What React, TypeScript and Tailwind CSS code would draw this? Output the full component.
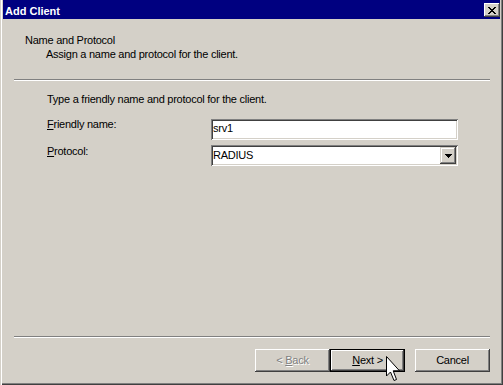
const raised =
  "shadow-[inset_-1px_-1px_#404040,inset_1px_1px_#ffffff,inset_-2px_-2px_#808080,inset_2px_2px_#d4d0c8]";

function CloseGlyph() {
  return (
    <svg width="8" height="7" viewBox="0 0 8 7" shapeRendering="crispEdges">
      <path
        d="M0 0h2v1H0zM6 0h2v1H6zM1 1h2v1H1zM5 1h2v1H5zM2 2h4v1H2zM3 3h2v1H3zM2 4h4v1H2zM1 5h2v1H1zM5 5h2v1H5zM0 6h2v1H0zM6 6h2v1H6z"
        fill="#000"
      />
    </svg>
  );
}

function DownArrow() {
  return (
    <svg width="7" height="4" viewBox="0 0 7 4" shapeRendering="crispEdges">
      <path d="M0 0h7v1H0zM1 1h5v1H1zM2 2h3v1H2zM3 3h1v1H3z" fill="#000" />
    </svg>
  );
}

function Cursor() {
  return (
    <svg width="15" height="26" viewBox="0 0 15 26" className="absolute left-[386px] top-[356px]">
      <polygon
        points="0.5,0.5 0.5,20 4.5,16 8,24.5 10.5,23.5 7.2,14.8 13.5,14.8"
        fill="#fff"
        stroke="#000"
        strokeWidth="1"
        strokeLinejoin="miter"
      />
    </svg>
  );
}

export default function App() {
  return (
    <div className="relative w-[503px] h-[385px] overflow-hidden bg-[#d4d0c8] flex flex-col px-[3px] pb-[3px] shadow-[inset_1px_0_#d4d0c8,inset_2px_0_#ffffff,inset_-1px_-1px_#404040,inset_-2px_-2px_#808080] font-['Liberation_Sans',Arial,sans-serif] text-[11px] text-black">
      {/* Title bar */}
      <div className="h-[19px] bg-[#000080] flex items-start justify-between shrink-0">
        <div className="mt-[5px] ml-[2px] leading-[13px] font-bold text-white">Add Client</div>
        <div className={`mt-[3px] w-[16px] h-[14px] bg-[#d4d0c8] flex items-center justify-center ${raised}`}>
          <CloseGlyph />
        </div>
      </div>

      {/* Body */}
      <div className="flex-1 flex flex-col tracking-[-0.25px]">
        <div className="pt-[14px]">
          <div className="pl-[22px] leading-[14px]">Name and Protocol</div>
          <div className="pl-[43px] leading-[14px]">Assign a name and protocol for the client.</div>
        </div>
        <div className="mt-[18px] ml-[11px] w-[476px] h-[2px] border-t border-t-[#808080] border-b border-b-white" />

        <div className="mt-[11px] pl-[44px] leading-[14px]">Type a friendly name and protocol for the client.</div>

        <div className="mt-[13px] pl-[44px] flex items-start">
          <div className="w-[164px] -mt-[1px] leading-[13px]">
            <span className="underline underline-offset-1">F</span>riendly name:
          </div>
          <div className="w-[247px] h-[21px] bg-white p-[2px] shadow-[inset_1px_1px_#808080,inset_-1px_-1px_#ffffff,inset_2px_2px_#404040,inset_-2px_-2px_#d4d0c8]">
            <div className="pt-[1px] leading-[13px]">srv1</div>
          </div>
        </div>

        <div className="mt-[5px] pl-[44px] flex items-start">
          <div className="w-[164px] mt-0 leading-[13px]">
            <span className="underline underline-offset-1">P</span>rotocol:
          </div>
          <div className="w-[247px] h-[21px] bg-white p-[2px] flex shadow-[inset_1px_1px_#808080,inset_-1px_-1px_#ffffff,inset_2px_2px_#404040,inset_-2px_-2px_#d4d0c8]">
            <div className="flex-1 flex items-center leading-[13px]">RADIUS</div>
            <div className="w-[16px] h-[17px] bg-[#d4d0c8] flex items-center justify-center shadow-[inset_-1px_-1px_#404040,inset_1px_1px_#d4d0c8,inset_-2px_-2px_#808080,inset_2px_2px_#ffffff]">
              <DownArrow />
            </div>
          </div>
        </div>

        {/* Bottom */}
        <div className="mt-auto">
          <div className="ml-[11px] w-[476px] h-[2px] border-t border-t-[#808080] border-b border-b-white" />
          <div className="mt-[11px] mb-[10px] pr-[10px] flex justify-end">
            <div className={`w-[75px] h-[23px] flex items-center justify-center leading-[13px] text-[#808080] [text-shadow:1px_1px_0_#ffffff] ${raised}`}>
              <span className="whitespace-pre">
                {"< "}
                <span className="underline underline-offset-1">B</span>ack
              </span>
            </div>
            <div className={`w-[75px] h-[23px] border border-black flex items-center justify-center leading-[13px] ${raised}`}>
              <span className="whitespace-pre">
                <span className="underline underline-offset-1">N</span>ext {">"}
              </span>
            </div>
            <div className={`ml-[10px] w-[75px] h-[23px] flex items-center justify-center leading-[13px] ${raised}`}>
              Cancel
            </div>
          </div>
        </div>
      </div>

      <Cursor />
    </div>
  );
}
